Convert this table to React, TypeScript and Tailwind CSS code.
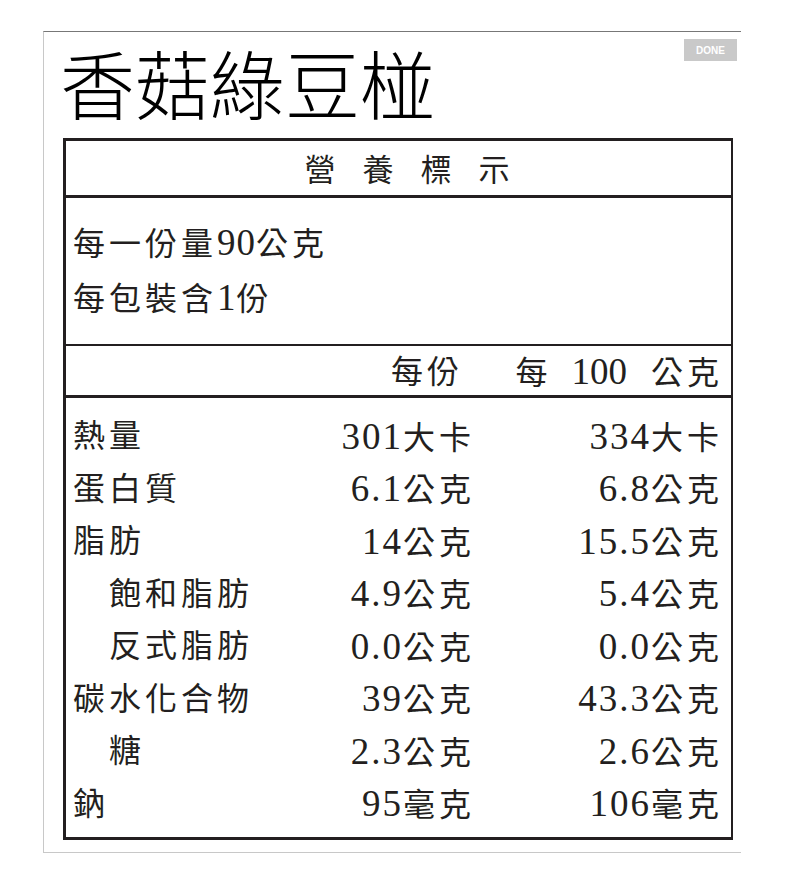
import React from 'react';

const serif = { fontFamily: '"Liberation Serif", "Noto Sans CJK TC", serif' };

const rows: { label: string; indent?: boolean; a: [string, string]; b: [string, string] }[] = [
    { label: '熱量', a: ['301', '大卡'], b: ['334', '大卡'] },
    { label: '蛋白質', a: ['6.1', '公克'], b: ['6.8', '公克'] },
    { label: '脂肪', a: ['14', '公克'], b: ['15.5', '公克'] },
    { label: '飽和脂肪', indent: true, a: ['4.9', '公克'], b: ['5.4', '公克'] },
    { label: '反式脂肪', indent: true, a: ['0.0', '公克'], b: ['0.0', '公克'] },
    { label: '碳水化合物', a: ['39', '公克'], b: ['43.3', '公克'] },
    { label: '糖', indent: true, a: ['2.3', '公克'], b: ['2.6', '公克'] },
    { label: '鈉', a: ['95', '毫克'], b: ['106', '毫克'] },
];

const Value: React.FC<{ v: [string, string] }> = ({ v }) => (
    <span className="whitespace-nowrap">
        <span className="text-[37px] tracking-[2px]">{v[0]}</span>
        <span className="text-[32px] tracking-[4px] mr-[-4px]">{v[1]}</span>
    </span>
);

const App: React.FC = () => {
    return (
        <div className="relative w-[787px] h-[884px] bg-white overflow-hidden text-[#231f20]">
            {/* DONE button */}
            <div
                className="absolute left-[684px] top-[39px] w-[53px] h-[22px] bg-[#c9c9c9] text-white text-[10px] font-bold flex items-center justify-center"
                style={{ fontFamily: '"Liberation Sans", Arial, sans-serif' }}
            >
                DONE
            </div>

            <div className="ml-[43px] mt-[31px] w-[698px] h-[822px] border-t border-l border-b border-t-[#777] border-l-[#c8c8c8] border-b-[#c8c8c8]">
                {/* Title */}
                <div
                    className="h-[106px] pl-[16px] pt-[12px] text-[75px] leading-none font-light text-black"
                    style={{ fontFamily: '"Noto Sans CJK TC", sans-serif' }}
                >
                    香菇綠豆椪
                </div>

                {/* Nutrition table */}
                <div className="ml-[19px] w-[670px] border-[3px] border-r-2 border-[#231f20]" style={serif}>
                    <div className="h-[57px] border-b-[3px] border-[#231f20] flex items-center justify-center pt-[6px] pl-[44px] text-[31px] tracking-[27px]">
                        營養標示
                    </div>

                    <div className="h-[148px] border-b-2 border-[#231f20] pl-[7px] pt-[18px] text-[32px] tracking-[4px] leading-[54px]">
                        <div>
                            每一份量<span className="text-[37px] tracking-[1px]">90</span>公克
                        </div>
                        <div>
                            每包裝含<span className="text-[37px] tracking-[1px]">1</span>份
                        </div>
                    </div>

                    <div className="h-[52px] border-b-[3px] border-[#231f20] flex items-center pl-[7px] pr-[12px] pt-[2px]">
                        <div className="flex-1" />
                        <div className="w-[200px] text-right pr-[8px] text-[32px] tracking-[4px]">每份</div>
                        <div className="w-[248px] flex justify-end items-baseline text-[32px]">
                            <span>每</span>
                            <span className="text-[37px] ml-[24px]">100</span>
                            <span className="tracking-[4px] mr-[-4px] ml-[24px]">公克</span>
                        </div>
                    </div>

                    <div className="pt-[12px] pb-[7px]">
                        {rows.map((r) => (
                            <div key={r.label} className="h-[52.5px] flex items-center pl-[7px] pr-[12px]">
                                <div className={`flex-1 text-[32px] tracking-[4px] ${r.indent ? 'pl-[36px]' : ''}`}>{r.label}</div>
                                <div className="w-[200px] text-right">
                                    <Value v={r.a} />
                                </div>
                                <div className="w-[248px] text-right">
                                    <Value v={r.b} />
                                </div>
                            </div>
                        ))}
                    </div>
                </div>
            </div>
        </div>
    );
};

export default App;
